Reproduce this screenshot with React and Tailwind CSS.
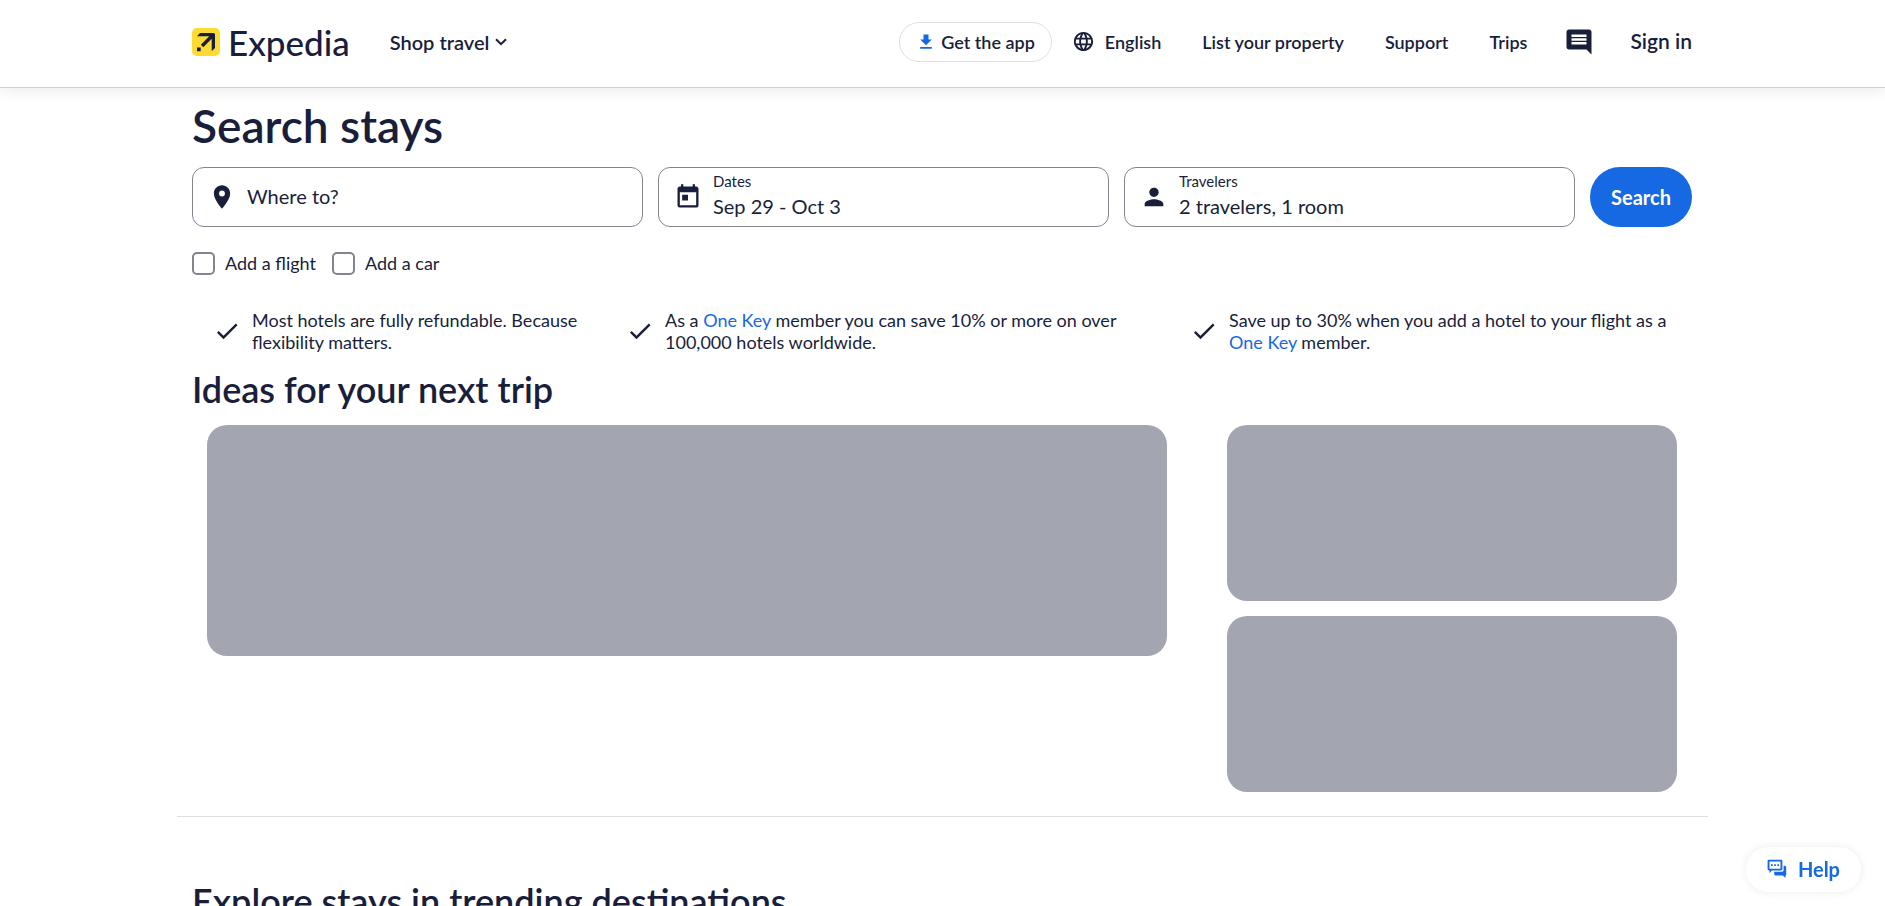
import { MdCheck, MdComment, MdFileDownload, MdLanguage, MdPerson, MdPlace, MdToday } from "react-icons/md";

function Logo() {
  return (
    <a href="#home" className="flex items-center gap-2">
      <svg viewBox="0 0 28 28" className="size-7" aria-hidden="true">
        <rect width="28" height="28" rx="5" fill="#fddb32" />
        <path d="M5 8.300 8 5h13.200c1.200 0 1.800.7 1.800 1.800V20l-3.300 3.200V10.800L11.300 19.200 8.800 16.700l8.400-8.400zM5 19.600h3.700v3.700H5z" fill="#191e3b" />
      </svg>
      <span className="text-[35px] leading-10 font-medium">Expedia</span>
    </a>
  );
}

function Header() {
  return (
    <header className="border-b border-[#d0d1d4] bg-white shadow-[0_2px_14px_rgba(0,0,0,0.09)]">
      <div className="mx-auto flex h-[87px] max-w-[1531px] items-center justify-between pr-4 pb-1 pl-[15px] font-semibold">
        <div className="flex items-center gap-10">
          <Logo />
          <button className="flex items-center gap-[6px] text-xl">
            Shop travel
            <svg viewBox="0 0 12 8" className="h-2 w-3" fill="none" stroke="currentColor" strokeWidth="2" aria-hidden="true">
              <path d="m1 1.200 5 5 5-5" />
            </svg>
          </button>
        </div>
        <nav className="flex items-center gap-[41px] text-lg">
          <div className="flex items-center gap-5">
            <a href="#app" className="flex h-10 items-center gap-[5px] rounded-full border border-[#dfe0e4] px-4">
              <MdFileDownload className="size-5 text-[#1668e3]" />
              Get the app
            </a>
            <button className="flex items-center gap-[10px]">
              <MdLanguage className="size-[23px]" />
              English
            </button>
          </div>
          <a href="#list">List your property</a>
          <a href="#support">Support</a>
          <a href="#trips">Trips</a>
          <div className="-ml-1 flex items-center gap-9">
            <button aria-label="Messages">
              <MdComment className="size-[30px]" />
            </button>
            <button className="text-[21px]">Sign in</button>
          </div>
        </nav>
      </div>
    </header>
  );
}

function Field({ icon: Icon, label, value }) {
  return (
    <button className="flex h-[60px] min-w-0 flex-1 items-center gap-2 rounded-xl border border-[#818494] px-[15px] text-left">
      <Icon className="size-7 shrink-0" />
      <span className="flex flex-col gap-px px-[3px] pb-[3px]">
        {label && <span className="text-[15px] leading-5">{label}</span>}
        <span className="text-xl leading-7">{value}</span>
      </span>
    </button>
  );
}

function Option({ id, children }) {
  return (
    <div className="flex items-center gap-[10px]">
      <input id={id} type="checkbox" className="size-[23px] appearance-none rounded-[5px] border-2 border-[#818494] checked:bg-[#1668e3]" />
      <label htmlFor={id} className="leading-6">{children}</label>
    </div>
  );
}

function Benefit({ children }) {
  return (
    <li className="flex items-center gap-[11px]">
      <MdCheck className="size-7 shrink-0" />
      <p className="pr-6">{children}</p>
    </li>
  );
}

function OneKey() {
  return <a href="#one-key" className="text-[#1668e3]">One Key</a>;
}

export default function App() {
  return (
    <div className="min-h-screen bg-white font-[Lato,sans-serif] text-[#191e3b]">
      <Header />
      <main className="mx-auto max-w-[1531px]">
        <div className="pr-4 pl-[15px]">
          <h1 className="pt-[10px] text-[46px] leading-[56px] font-semibold">Search stays</h1>
          <form className="pt-[13px]" onSubmit={(e) => e.preventDefault()}>
            <div className="flex gap-[15px]">
              <Field icon={MdPlace} value="Where to?" />
              <Field icon={MdToday} label="Dates" value="Sep 29 - Oct 3" />
              <Field icon={MdPerson} label="Travelers" value="2 travelers, 1 room" />
              <button type="submit" className="h-[60px] w-[102px] rounded-full bg-[#1668e3] text-xl font-bold text-white">Search</button>
            </div>
            <div className="flex gap-4 pt-6 text-lg">
              <Option id="flight">Add a flight</Option>
              <Option id="car">Add a car</Option>
            </div>
          </form>
          <ul className="grid grid-cols-[413fr_564fr_502fr] pt-[34px] pl-[21px] text-lg leading-[22px]">
            <Benefit>Most hotels are fully refundable. Because flexibility matters.</Benefit>
            <Benefit>As a <OneKey /> member you can save 10% or more on over 100,000 hotels worldwide.</Benefit>
            <Benefit>Save up to 30% when you add a hotel to your flight as a <OneKey /> member.</Benefit>
          </ul>
          <h2 className="pt-[14px] text-4xl leading-[44px] font-semibold">Ideas for your next trip</h2>
          <div className="grid grid-cols-[960fr_450fr] items-start gap-[60px] px-[15px] pt-[14px] pb-6">
            <div className="h-[231px] rounded-[20px] bg-[#a3a5b1]" />
            <div className="grid gap-[15px]">
              <div className="h-[176px] rounded-[20px] bg-[#a3a5b1]" />
              <div className="h-[176px] rounded-[20px] bg-[#a3a5b1]" />
            </div>
          </div>
        </div>
        <hr className="border-[#dfe0e4]" />
        <h2 className="px-[15px] pt-[62px] text-4xl leading-[44px] font-semibold">Explore stays in trending destinations</h2>
      </main>
      <button className="fixed right-6 bottom-[14px] flex h-[45px] items-center gap-[11px] rounded-full bg-white px-[21px] pb-px text-xl font-bold text-[#1668e3] shadow-[0_0_10px_rgba(0,0,0,0.08)]">
        <svg viewBox="0 0 20 20" className="size-5" fill="currentColor" aria-hidden="true">
          <path fillRule="evenodd" d="M2 .7h12c.8 0 1.400.6 1.400 1.400v8c0 .8-.6 1.400-1.400 1.400H5L2.500 14v-2.500H2c-.8 0-1.400-.6-1.400-1.400v-8C.6 1.300 1.200.7 2 .7zm.5 1.800v7.200h11V2.500zM4 5.200h1.700v1.700H4zm3.200 0h1.700v1.700H7.200zm3.200 0h1.700v1.700h-1.700z" />
          <path d="M16.600 6.800h1c1 0 1.600.6 1.600 1.600v8h-.8V19l-2.500-2.500H8.600c-.9 0-1.400-.5-1.400-1.400v-2.400h7.800c1 0 1.600-.6 1.600-1.600z" />
        </svg>
        Help
      </button>
    </div>
  );
}
